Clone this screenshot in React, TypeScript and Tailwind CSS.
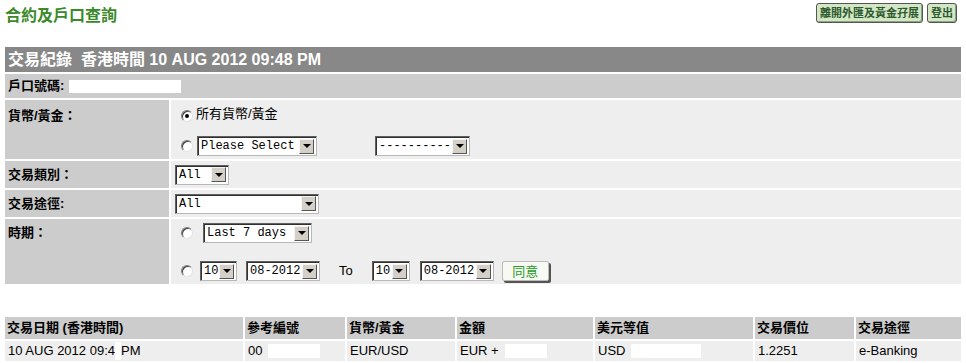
const cjk = '"Liberation Sans", "Noto Sans CJK TC", sans-serif';
const mono = '"Liberation Mono", "Noto Sans CJK TC", monospace';

function Radio({ checked = false }: { checked?: boolean }) {
  return (
    <span className="inline-flex h-[12px] w-[12px] items-center justify-center rounded-full border border-t-[#7b7b7b] border-l-[#7b7b7b] border-b-[#e4e4e4] border-r-[#e4e4e4] bg-white shadow-[inset_1px_1px_0_#404040]">
      {checked && <span className="h-[4px] w-[4px] rounded-full bg-black" />}
    </span>
  );
}

function Select({ width, text }: { width: number; text: string }) {
  return (
    <div
      className="flex h-[20px] items-center justify-between overflow-hidden border border-t-[#606060] border-l-[#606060] border-b-[#b8b8b8] border-r-[#b8b8b8] bg-white pl-[3px] pr-[2px] shadow-[inset_1px_1px_0_#303030]"
      style={{ width }}
    >
      <span className="whitespace-nowrap text-[12px] leading-none text-black" style={{ fontFamily: mono }}>
        {text}
      </span>
      <span className="flex h-[15px] w-[15px] shrink-0 items-center justify-center border border-t-[#f4f4f4] border-l-[#f4f4f4] border-b-[#555] border-r-[#555] bg-[#d4d0c8]">
        <span className="h-0 w-0 border-x-[4px] border-t-[4px] border-x-transparent border-t-black" />
      </span>
    </div>
  );
}

function Label({ children }: { children: React.ReactNode }) {
  return <span className="text-[13px] font-bold text-black">{children}</span>;
}

export default function App() {
  const cols = [
    { head: '交易日期 (香港時間)', cell: <>10 AUG 2012 09:4<span className="inline-block h-[18px] w-[6px] bg-white align-middle" />PM</> },
    { head: '參考編號', cell: <>00<span className="ml-[6px] inline-block h-[14px] w-[52px] bg-white align-middle" /></> },
    { head: '貨幣/黃金', cell: 'EUR/USD' },
    { head: '金額', cell: <>EUR +<span className="ml-[6px] inline-block h-[14px] w-[42px] bg-white align-middle" /></> },
    { head: '美元等值', cell: <>USD<span className="ml-[6px] inline-block h-[14px] w-[70px] bg-white align-middle" /></> },
    { head: '交易價位', cell: '1.2251' },
    { head: '交易途徑', cell: 'e-Banking' },
  ];

  return (
    <div className="min-h-[363px] w-[966px] bg-white px-[5px]" style={{ fontFamily: cjk }}>
      {/* Top title and buttons */}
      <div className="flex h-[47px] items-start justify-between">
        <h1 className="mt-[5px] text-[16px] font-bold leading-[22px] text-[#3b8a2a]">合約及戶口查詢</h1>
        <div className="mr-[4px] mt-[3px] flex gap-[4px]">
          <button className="h-[20px] rounded-[3px] border border-[#555] bg-[#d3e6c6] px-[3px] text-[11px] font-bold leading-none text-[#2d5a2d] shadow-[inset_-1px_-1px_0_#8aa67c]">
            離開外匯及黃金孖展
          </button>
          <button className="h-[20px] rounded-[3px] border border-[#555] bg-[#d3e6c6] px-[3px] text-[11px] font-bold leading-none text-[#2d5a2d] shadow-[inset_-1px_-1px_0_#8aa67c]">
            登出
          </button>
        </div>
      </div>

      {/* Search form */}
      <div className="flex flex-col gap-[2px]">
        <div className="flex h-[25px] items-center bg-[#888888] pl-[3px]">
          <span className="text-[16px] font-bold text-white">交易紀錄&nbsp;&nbsp;香港時間 10 AUG 2012 09:48 PM</span>
        </div>
        <div className="flex h-[24px] items-center bg-[#cccccc] pl-[3px]">
          <Label>戶口號碼:</Label>
          <span className="ml-[5px] h-[13px] w-[112px] bg-white" />
        </div>

        <div className="grid grid-cols-[164px_1fr] gap-x-[2px] gap-y-[2px]">
          <div className="h-[59px] bg-[#cccccc] pl-[3px] pt-[3px]">
            <Label>貨幣/黃金：</Label>
          </div>
          <div className="flex h-[59px] flex-col bg-[#eeeeee] pl-[10px]">
            <div className="flex h-[22px] items-end gap-[3px]">
              <Radio checked />
              <span className="text-[13px] leading-[16px] text-black">所有貨幣/黃金</span>
            </div>
            <div className="mt-[14px] flex items-center">
              <Radio />
              <div className="ml-[4px]"><Select width={120} text="Please Select" /></div>
              <div className="ml-[58px]"><Select width={95} text="----------" /></div>
            </div>
          </div>

          <div className="flex h-[27px] items-center bg-[#cccccc] pl-[3px]">
            <Label>交易類別：</Label>
          </div>
          <div className="flex h-[27px] items-center bg-[#eeeeee] pl-[4px]">
            <Select width={54} text="All" />
          </div>

          <div className="flex h-[27px] items-center bg-[#cccccc] pl-[3px]">
            <Label>交易途徑:</Label>
          </div>
          <div className="flex h-[27px] items-center bg-[#eeeeee] pl-[4px]">
            <Select width={144} text="All" />
          </div>

          <div className="h-[65px] bg-[#cccccc] pl-[3px] pt-[1px]">
            <Label>時期：</Label>
          </div>
          <div className="flex h-[65px] flex-col bg-[#eeeeee] pl-[10px]">
            <div className="mt-[4px] flex items-center">
              <Radio />
              <div className="ml-[10px]"><Select width={109} text="Last 7 days" /></div>
            </div>
            <div className="mt-[18px] flex items-center">
              <Radio />
              <div className="ml-[7px]"><Select width={37} text="10" /></div>
              <div className="ml-[9px]"><Select width={74} text="08-2012" /></div>
              <span className="ml-[19px] mr-[19px] text-[13px] text-black">To</span>
              <Select width={38} text="10" />
              <div className="ml-[10px]"><Select width={74} text="08-2012" /></div>
              <button className="ml-[8px] h-[20px] w-[47px] rounded-[2px] border border-[#bbb] bg-[#f7f9f3] text-[13px] leading-none text-[#2a9a2a] shadow-[2px_2px_0_#555]">
                同意
              </button>
            </div>
          </div>
        </div>
      </div>

      {/* Result table */}
      <div className="mt-[33px] grid grid-cols-[238px_100px_108px_136px_158px_99px_105px] gap-x-[2px] gap-y-[2px]">
        {cols.map((c) => (
          <div key={c.head} className="flex h-[22px] items-center whitespace-pre bg-[#cccccc] pl-[2px] text-[13px] font-bold text-black">
            {c.head}
          </div>
        ))}
        {cols.map((c) => (
          <div key={c.head + 'v'} className="flex h-[20px] items-center bg-[#eeeeee] pl-[3px] text-[13px] text-black">
            {c.cell}
          </div>
        ))}
      </div>
    </div>
  );
}
